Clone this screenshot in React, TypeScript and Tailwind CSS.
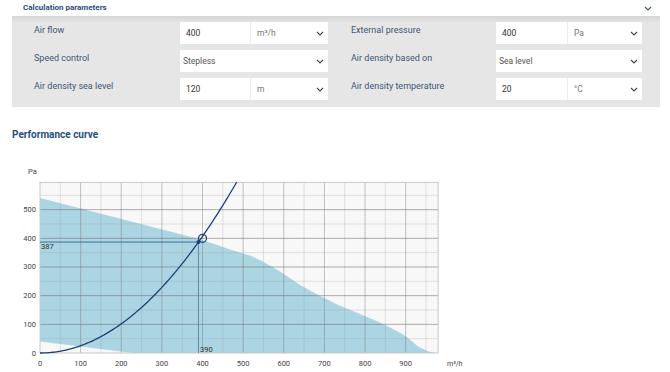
import React from "react";

const X = (q: number) => 40 + q * 0.4063;
const Y = (p: number) => 203 - p * 0.2867; // svg starts at page y=150

const Chevron = ({ color = "#444" }: { color?: string }) => (
  <svg width="8" height="5" viewBox="0 0 8 5" className="shrink-0">
    <path d="M1 1 L4 4 L7 1" fill="none" stroke={color} strokeWidth="1.1" />
  </svg>
);

type Field = {
  label: string;
  value: string;
  unit?: string;
};

const left: Field[] = [
  { label: "Air flow", value: "400", unit: "m³/h" },
  { label: "Speed control", value: "Stepless" },
  { label: "Air density sea level", value: "120", unit: "m" },
];

const right: Field[] = [
  { label: "External pressure", value: "400", unit: "Pa" },
  { label: "Air density based on", value: "Sea level" },
  { label: "Air density temperature", value: "20", unit: "°C" },
];

const Row = ({ f, labelW, inputW }: { f: Field; labelW: string; inputW: string }) => (
  <div className="flex items-center h-[22px]">
    <div className={`${labelW} text-[9px] text-[#3f5674] mb-[4px]`}>{f.label}</div>
    {f.unit ? (
      <div className="flex flex-1 h-full">
        <div className={`${inputW} h-full bg-white flex items-center pl-[6px] text-[8.5px] text-[#333]`}>
          {f.value}
        </div>
        <div className="flex-1 h-full bg-white border-l border-[#ececec] flex items-center justify-between pl-[6px] pr-[4px] text-[8.5px] text-[#777]">
          <span>{f.unit}</span>
          <Chevron />
        </div>
      </div>
    ) : (
      <div className="flex-1 h-full bg-white flex items-center justify-between pl-[3px] pr-[4px] text-[8.5px] text-[#555]">
        <span>{f.value}</span>
        <Chevron />
      </div>
    )}
  </div>
);

const top: [number, number][] = [
  [0, 541], [394, 397], [470, 360], [520, 338], [545, 322], [590, 285], [640, 237],
  [685, 202], [734, 167], [783, 139], [833, 109], [882, 74], [902, 57], [931, 22],
  [956, 5], [975, 0],
];
const bottom: [number, number][] = [[229, 0], [0, 40]];

const Chart = () => {
  const fill = [...top, ...bottom].map(([q, p]) => `${X(q)},${Y(p)}`).join(" ");
  const curve: string[] = [];
  for (let q = 0; q <= 484; q += 4) curve.push(`${X(q)},${Y(0.002544 * q * q)}`);
  const vx: number[] = [];
  for (let q = 50; q < 980; q += 50) vx.push(q);
  const hy: number[] = [];
  for (let p = 50; p < 600; p += 50) hy.push(p);
  const x0 = X(0);
  const x1 = X(980);
  const y0 = Y(0);
  const y1 = Y(595);
  return (
    <svg width="670" height="222" className="block" style={{ fontFamily: "Roboto, sans-serif" }}>
      <rect x={x0} y={y1} width={x1 - x0} height={y0 - y1} fill="#f8f8f8" />
      <polygon points={fill} fill="#abd5e2" />
      {vx.map((q) => (
        <line key={q} x1={X(q)} x2={X(q)} y1={y1} y2={y0}
          stroke={q % 100 === 0 ? "rgba(120,120,120,0.45)" : "rgba(150,150,150,0.25)"} strokeWidth="1" />
      ))}
      {hy.map((p) => (
        <line key={p} x1={x0} x2={x1} y1={Y(p)} y2={Y(p)}
          stroke={p % 100 === 0 ? "rgba(110,110,110,0.55)" : "rgba(150,150,150,0.25)"} strokeWidth="1" />
      ))}
      <rect x={x0} y={y1} width={x1 - x0} height={y0 - y1} fill="none" stroke="#c8c8c8" />
      <line x1={x0} x2={X(390)} y1={Y(387)} y2={Y(387)} stroke="#3e6e93" strokeWidth="1" />
      <line x1={X(390)} x2={X(390)} y1={Y(387)} y2={y0} stroke="#5b8aa8" strokeWidth="1" />
      <polyline points={curve.join(" ")} fill="none" stroke="#1f3f74" strokeWidth="1.3" />
      <circle cx={X(400)} cy={Y(400)} r="4" fill="none" stroke="#1f3f74" strokeWidth="1.2" />
      <circle cx={X(390)} cy={Y(387)} r="2" fill="#1f3f74" />
      <text x="41" y={Y(387) + 7} fontSize="7.5" fill="#333">387</text>
      <text x={X(390) + 1.5} y={y0 - 1.5} fontSize="7.5" fill="#333">390</text>
      <text x="28" y="24" fontSize="7.5" fill="#444">Pa</text>
      {[0, 100, 200, 300, 400, 500].map((p) => (
        <text key={p} x="36" y={Y(p) + 2.5} fontSize="7.5" fill="#444" textAnchor="end">{p}</text>
      ))}
      {[0, 100, 200, 300, 400, 500, 600, 700, 800, 900].map((q) => (
        <text key={q} x={X(q)} y="216" fontSize="7.5" fill="#444" textAnchor="middle">{q}</text>
      ))}
      <text x="447" y="216" fontSize="7" fill="#444">m³/h</text>
    </svg>
  );
};

export default function App() {
  return (
    <div className="w-[670px] h-[372px] bg-white overflow-hidden" style={{ fontFamily: "Roboto, 'Liberation Sans', sans-serif" }}>
      <div className="h-4 flex items-center justify-between pl-[23px] pr-[18px]">
        <span className="text-[8px] font-bold text-[#1f4e7e]">Calculation parameters</span>
        <Chevron color="#2a5f93" />
      </div>
      <div className="ml-3 w-[648px] h-[91px] bg-linear-to-b from-[#d6d6d6] to-[#e6e6e6] to-[8%] flex pt-[6px] pl-[22px] pr-[18px] gap-[23px]">
        <div className="w-[294px] flex flex-col gap-[6px]">
          {left.map((f) => <Row key={f.label} f={f} labelW="w-[146px]" inputW="w-[70px]" />)}
        </div>
        <div className="flex-1 flex flex-col gap-[6px]">
          {right.map((f) => <Row key={f.label} f={f} labelW="w-[145px]" inputW="w-[71px]" />)}
        </div>
      </div>
      <div className="pl-3 pt-[20px] h-[43px] text-[10px] font-bold text-[#1f4e7e]">Performance curve</div>
      <Chart />
    </div>
  );
}
